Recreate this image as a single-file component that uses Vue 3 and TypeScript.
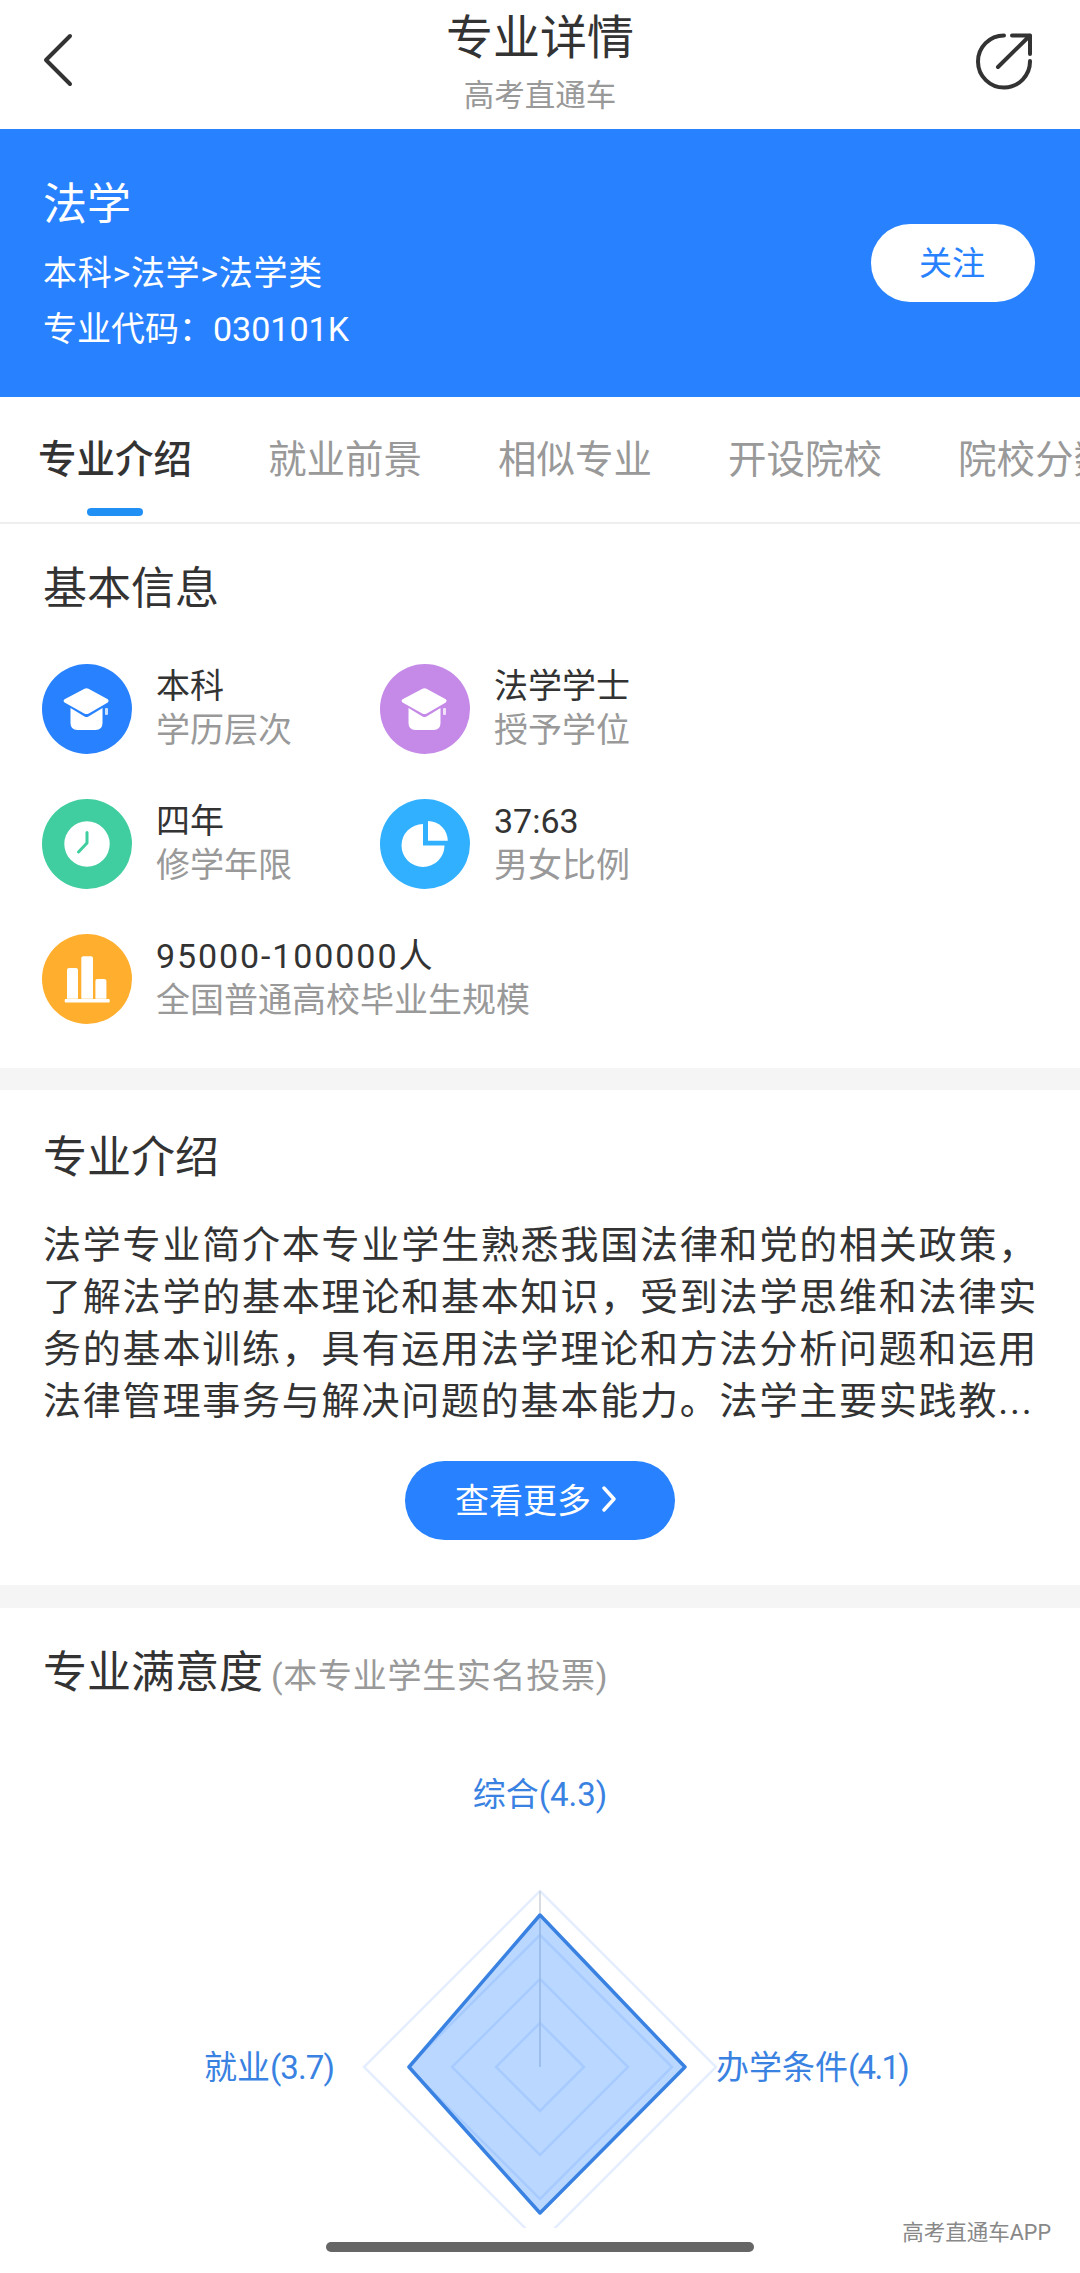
<script setup lang="ts">
type IconName = 'cap' | 'clock' | 'pie' | 'bars'

interface InfoItem {
  name: string
  label: string
  icon: IconName
  color: string
  wide?: boolean
}

const tabs = ['专业介绍', '就业前景', '相似专业', '开设院校', '院校分数线']

const infoItems: InfoItem[] = [
  { name: '本科', label: '学历层次', icon: 'cap', color: '#2882ff' },
  { name: '法学学士', label: '授予学位', icon: 'cap', color: '#c589e8' },
  { name: '四年', label: '修学年限', icon: 'clock', color: '#40cda0' },
  { name: '37:63', label: '男女比例', icon: 'pie', color: '#30b0ff' },
  { name: '95000-100000人', label: '全国普通高校毕业生规模', icon: 'bars', color: '#ffae2d', wide: true },
]

const intro =
  '法学专业简介本专业学生熟悉我国法律和党的相关政策，了解法学的基本理论和基本知识，受到法学思维和法律实务的基本训练，具有运用法学理论和方法分析问题和运用法律管理事务与解决问题的基本能力。法学主要实践教...'

// radar centre and radii, in the svg's own coordinates
const cx = 540
const cy = 365
const gridLevels = [44, 88, 132, 176]

function diamond(top: number, right: number, bottom: number, left: number) {
  return `${cx},${cy - top} ${cx + right},${cy} ${cx},${cy + bottom} ${cx - left},${cy}`
}

const gridPolys = gridLevels.map((r) => diamond(r, r, r, r))
const dataPoly = diamond(152, 145, 146, 131)
</script>

<template>
  <div class="page">
    <header class="topbar">
      <svg class="back" width="100" height="100" viewBox="0 0 100 100">
        <path d="M50 26 L26 50 L50 74" fill="none" stroke="#333" stroke-width="4" stroke-linecap="round" stroke-linejoin="round" />
      </svg>
      <div class="topbar-title">
        <div class="title">专业详情</div>
        <div class="subtitle">高考直通车</div>
      </div>
      <svg class="share" width="110" height="90" viewBox="0 0 110 90">
        <path d="M44 20.5 A26 26 0 1 0 70 46" fill="none" stroke="#333" stroke-width="4" stroke-linecap="round" />
        <path d="M38 52 L70 20.5 M52 20.5 H70 V39" fill="none" stroke="#333" stroke-width="4" stroke-linecap="round" stroke-linejoin="round" />
      </svg>
    </header>

    <section class="banner">
      <div>
        <div class="banner-name">法学</div>
        <div class="banner-path">本科&gt;法学&gt;法学类</div>
        <div class="banner-code">专业代码：030101K</div>
      </div>
      <button class="follow">关注</button>
    </section>

    <nav class="tabs">
      <div v-for="(tab, i) in tabs" :key="tab" class="tab" :class="{ active: i === 0 }">{{ tab }}</div>
    </nav>

    <section class="block info-block">
      <h2 class="heading">基本信息</h2>
      <div class="info-grid">
        <div v-for="item in infoItems" :key="item.name" class="info-item" :class="{ wide: item.wide }">
          <svg class="info-icon" width="90" height="90" viewBox="0 0 90 90">
            <circle cx="45" cy="45" r="45" :fill="item.color" />
            <template v-if="item.icon === 'cap'">
              <path d="M42.5 24.8 Q44.5 23.6 46.5 24.8 L65.8 35.2 Q67.6 36.8 65.8 38.4 L46.8 49.4 Q44.5 50.6 42.2 49.4 L22.6 38.4 Q20.6 36.8 22.6 35.2 Z" fill="#fff" />
              <path d="M28.5 44 L42.5 52.4 Q44.5 53.4 46.5 52.4 L60.5 44 V59 Q60.5 66 53.5 66 H35.5 Q28.5 66 28.5 59 Z" fill="#fff" />
              <rect x="63" y="44" width="3" height="7" rx="1" fill="#fff" opacity="0.75" />
            </template>
            <template v-else-if="item.icon === 'clock'">
              <circle cx="45" cy="45" r="22.7" fill="#fff" />
              <path d="M45 33.5 V44 L36.5 53" fill="none" :stroke="item.color" stroke-width="3" stroke-linecap="round" stroke-linejoin="round" />
            </template>
            <template v-else-if="item.icon === 'pie'">
              <path d="M43 25 V46.5 H64.5 A21.5 21.5 0 1 1 43 25 Z" fill="#fff" />
              <path d="M48 22 A20 20 0 0 1 67.8 41.7 H48 Z" fill="#fff" />
            </template>
            <template v-else>
              <path d="M25 64.7 V36 Q25 34 27 34 H34 Q36 34 36 36 V64.7 Z" fill="#fff" />
              <path d="M39.3 64.7 V24.3 Q39.3 22.3 41.3 22.3 H49 Q51 22.3 51 24.3 V64.7 Z" fill="#fff" />
              <path d="M53.4 64.7 V47 Q53.4 45 55.4 45 H62.4 Q64.4 45 64.4 47 V64.7 Z" fill="#fff" />
              <rect x="22.7" y="65" width="45" height="3.6" rx="1" fill="#fff" />
            </template>
          </svg>
          <div class="info-text">
            <div class="info-name">{{ item.name }}</div>
            <div class="info-label">{{ item.label }}</div>
          </div>
        </div>
      </div>
    </section>

    <section class="block intro-block">
      <h2 class="heading">专业介绍</h2>
      <p class="intro">{{ intro }}</p>
      <button class="more">
        查看更多
        <svg width="16" height="26" viewBox="0 0 16 26">
          <path d="M3 2 L13 13 L3 24" fill="none" stroke="#fff" stroke-width="3.4" stroke-linecap="round" stroke-linejoin="round" />
        </svg>
      </button>
    </section>

    <section class="block radar-block">
      <h2 class="heading">专业满意度<span class="heading-note">(本专业学生实名投票)</span></h2>
      <svg class="radar" width="1080" height="571" viewBox="0 0 1080 571">
        <polygon v-for="poly in gridPolys" :key="poly" :points="poly" fill="none" stroke="#e4eeff" stroke-width="2.5" />
        <line :x1="cx" :y1="cy" :x2="cx" :y2="cy - 176" stroke="#c9d0d8" stroke-width="1.5" />
        <polygon :points="dataPoly" fill="rgba(40, 130, 255, 0.32)" stroke="#3a82e2" stroke-width="3.5" stroke-linejoin="round" />
        <text class="radar-label" :x="cx" y="92" text-anchor="middle">综合(4.3)</text>
        <text class="radar-label" x="334" :y="cy" text-anchor="end">就业<tspan class="tight-sm">(3.7)</tspan></text>
        <text class="radar-label" x="716" :y="cy">办学条件<tspan class="tight">(4.1)</tspan></text>
      </svg>
    </section>

    <div class="bottom-bar"></div>
    <div class="watermark">高考直通车APP</div>
    <div class="home-indicator"></div>
  </div>
</template>

<style>
html,
body {
  margin: 0;
  background: #fff;
  overflow: hidden;
}
</style>

<style scoped>
.page {
  position: relative;
  width: 1080px;
  height: 2273px;
  overflow: hidden;
  background: #f5f5f5;
  color: #333;
  font-family: Roboto, "Noto Sans CJK SC", sans-serif;
}

.topbar {
  display: grid;
  grid-template-columns: 1fr auto 1fr;
  height: 129px;
  padding: 10px 10px 0 20px;
  box-sizing: border-box;
  background: #fff;
}

.share {
  justify-self: end;
  margin-top: 5px;
}

.topbar-title {
  margin-left: -10px;
  text-align: center;
}

.title {
  font-size: 47px;
  line-height: 56px;
}

.subtitle {
  margin-top: 10px;
  font-size: 30.5px;
  line-height: 40px;
  color: #999;
}

.banner {
  display: flex;
  align-items: center;
  justify-content: space-between;
  height: 268px;
  padding: 0 45px 0 43px;
  box-sizing: border-box;
  background: #2882ff;
  color: #fff;
}

.banner-name {
  padding-top: 2px;
  font-size: 44px;
  line-height: 60px;
}

.banner-path {
  margin-top: 13px;
  font-size: 34px;
  letter-spacing: 0.7px;
  line-height: 50px;
}

.banner-code {
  margin-top: 6px;
  font-size: 34px;
  line-height: 50px;
}

.follow {
  width: 164px;
  height: 78px;
  padding: 0 2px 5px 0;
  border: none;
  border-radius: 39px;
  background: #fff;
  color: #2882ff;
  font: inherit;
  font-size: 33px;
}

.tabs {
  display: flex;
  gap: 76px;
  height: 127px;
  padding: 33px 0 0 38px;
  box-sizing: border-box;
  overflow: hidden;
  background: #fff;
  border-bottom: 2px solid #eee;
}

.tab {
  position: relative;
  flex: none;
  font-size: 38.5px;
  line-height: 60px;
  color: #999;
  white-space: nowrap;
}

.tab.active {
  color: #333;
  font-weight: 500;
}

.tab.active::after {
  content: "";
  position: absolute;
  left: 49px;
  top: 78px;
  width: 56px;
  height: 8px;
  border-radius: 4px;
  background: #2090f5;
}

.block {
  padding: 0 43px;
  background: #fff;
}

.heading {
  height: 60px;
  margin: 0;
  font-size: 44px;
  font-weight: 400;
  line-height: 60px;
}

.heading-note {
  margin-left: 8px;
  font-size: 34px;
  letter-spacing: 0.7px;
  line-height: 1;
  color: #999;
}

.info-block {
  height: 544px;
  padding-top: 35px;
  box-sizing: border-box;
}

.info-grid {
  display: grid;
  grid-template-columns: 338px 1fr;
  row-gap: 45px;
  margin-top: 45px;
  margin-left: -1px;
}

.info-item {
  display: flex;
  align-items: center;
  gap: 24px;
}

.info-item.wide {
  grid-column: 1 / -1;
}

.info-icon {
  flex: none;
}

.info-text {
  margin-top: -2px;
}

.info-name {
  font-size: 34px;
  line-height: 44px;
}

.info-item.wide .info-name {
  letter-spacing: 1.9px;
}

.info-label {
  font-size: 34px;
  line-height: 44px;
  color: #999;
}

.intro-block {
  display: flex;
  flex-direction: column;
  height: 495px;
  margin-top: 22px;
  padding-top: 38px;
  box-sizing: border-box;
}

.intro {
  width: 997px;
  margin: 31px 0 0;
  font-size: 38px;
  letter-spacing: 1.8px;
  line-height: 52px;
}

.more {
  display: flex;
  align-items: center;
  justify-content: center;
  gap: 10px;
  align-self: center;
  width: 270px;
  height: 79px;
  margin-top: 34px;
  padding: 0 8px 4px 0;
  border: none;
  border-radius: 40px;
  background: #2882ff;
  color: #fff;
  font: inherit;
  font-size: 34px;
}

.radar-block {
  margin-top: 23px;
  padding-top: 35px;
  height: 665px;
  box-sizing: border-box;
}

.radar {
  display: block;
  margin-top: -1px;
  margin-left: -43px;
}

.radar-label {
  fill: #3a82e2;
  font-size: 33px;
  dominant-baseline: central;
}

.tight {
  letter-spacing: -1.7px;
}

.tight-sm {
  letter-spacing: -0.9px;
}

.bottom-bar {
  position: absolute;
  left: 0;
  right: 0;
  top: 2228px;
  bottom: 0;
  background: #fff;
}

.watermark {
  position: absolute;
  right: 29px;
  top: 2221px;
  font-size: 21.5px;
  line-height: 24px;
  color: #888;
}

.home-indicator {
  position: absolute;
  left: 326px;
  top: 2242px;
  width: 428px;
  height: 10px;
  border-radius: 5px;
  background: #666;
}
</style>
